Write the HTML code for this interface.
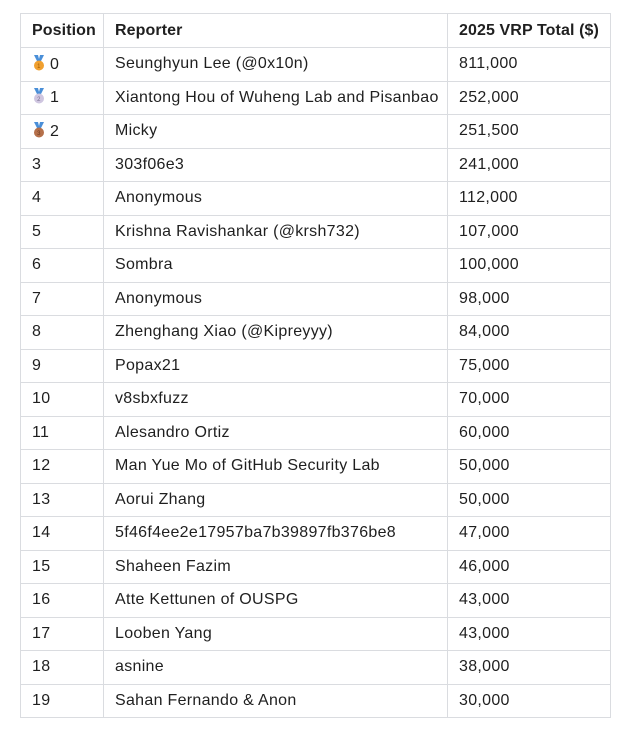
<!DOCTYPE html>
<html><head><style>
body{margin:0;background:#fff;}
table{position:absolute;left:20px;top:13px;border-collapse:collapse;font-family:"Liberation Sans",Arial,sans-serif;font-size:16px;letter-spacing:0.3px;color:#1f1f1f;}
td,th{border:1px solid #dadce0;height:32.5px;padding:0 0 0 11px;text-align:left;white-space:nowrap;}
th{font-weight:bold;height:33px;font-size:16px;letter-spacing:0.1px;}
.c1{width:71px}.c2{width:332px}.c3{width:151px}
.m{display:inline-block;vertical-align:-2px;margin-right:4px}
</style></head><body>
<table>
<tr><th class="c1">Position</th><th class="c2">Reporter</th><th class="c3">2025 VRP Total ($)</th></tr>
<tr><td><svg class="m" width="14" height="16" viewBox="0 0 14 16"><path d="M2 0h4l1 4 1-4h4l-3 6H5z" fill="#4a8fd8"/><circle cx="7" cy="10.5" r="5" fill="#f0a030"/><text x="7" y="13" font-size="6" text-anchor="middle" fill="#a05a00">1</text></svg>0</td><td>Seunghyun Lee (@0x10n)</td><td>811,000</td></tr>
<tr><td><svg class="m" width="14" height="16" viewBox="0 0 14 16"><path d="M2 0h4l1 4 1-4h4l-3 6H5z" fill="#4a8fd8"/><circle cx="7" cy="10.5" r="5" fill="#cfc6e0"/><text x="7" y="13" font-size="6" text-anchor="middle" fill="#7a6f90">2</text></svg>1</td><td>Xiantong Hou of Wuheng Lab and Pisanbao</td><td>252,000</td></tr>
<tr><td><svg class="m" width="14" height="16" viewBox="0 0 14 16"><path d="M2 0h4l1 4 1-4h4l-3 6H5z" fill="#4a8fd8"/><circle cx="7" cy="10.5" r="5" fill="#b5704a"/><text x="7" y="13" font-size="6" text-anchor="middle" fill="#6a3a20">3</text></svg>2</td><td>Micky</td><td>251,500</td></tr>
<tr><td>3</td><td>303f06e3</td><td>241,000</td></tr>
<tr><td>4</td><td>Anonymous</td><td>112,000</td></tr>
<tr><td>5</td><td>Krishna Ravishankar (@krsh732)</td><td>107,000</td></tr>
<tr><td>6</td><td>Sombra</td><td>100,000</td></tr>
<tr><td>7</td><td>Anonymous</td><td>98,000</td></tr>
<tr><td>8</td><td>Zhenghang Xiao (@Kipreyyy)</td><td>84,000</td></tr>
<tr><td>9</td><td>Popax21</td><td>75,000</td></tr>
<tr><td>10</td><td>v8sbxfuzz</td><td>70,000</td></tr>
<tr><td>11</td><td>Alesandro Ortiz</td><td>60,000</td></tr>
<tr><td>12</td><td>Man Yue Mo of GitHub Security Lab</td><td>50,000</td></tr>
<tr><td>13</td><td>Aorui Zhang</td><td>50,000</td></tr>
<tr><td>14</td><td>5f46f4ee2e17957ba7b39897fb376be8</td><td>47,000</td></tr>
<tr><td>15</td><td>Shaheen Fazim</td><td>46,000</td></tr>
<tr><td>16</td><td>Atte Kettunen of OUSPG</td><td>43,000</td></tr>
<tr><td>17</td><td>Looben Yang</td><td>43,000</td></tr>
<tr><td>18</td><td>asnine</td><td>38,000</td></tr>
<tr><td>19</td><td>Sahan Fernando &amp; Anon</td><td>30,000</td></tr>
</table>
</body></html>
